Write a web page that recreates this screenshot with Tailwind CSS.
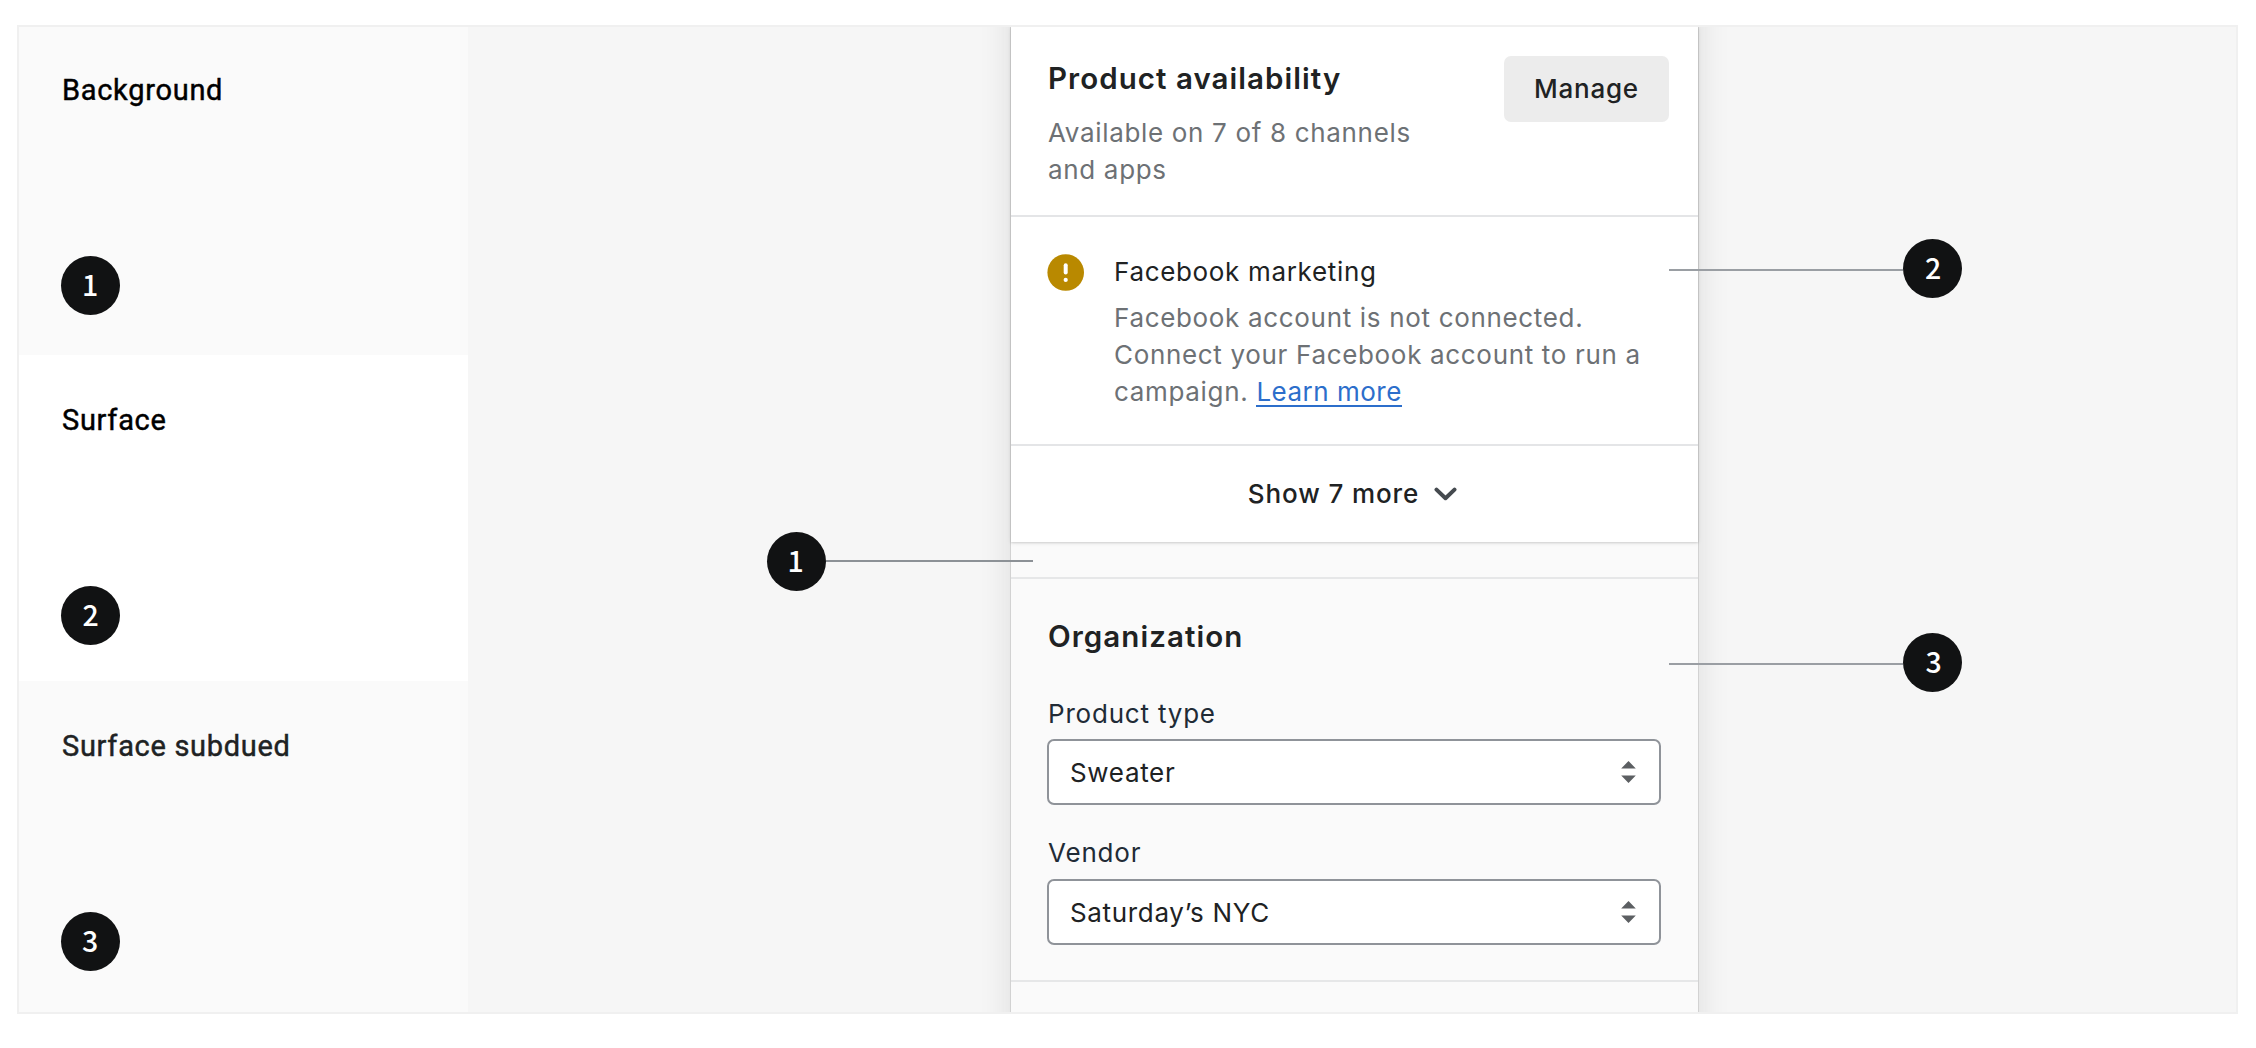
<!DOCTYPE html>
<html lang="en">
<head>
<meta charset="utf-8">
<title>Surface colors</title>
<script src="https://cdn.jsdelivr.net/npm/@tailwindcss/browser@4"></script>
</head>
<body class="h-[1048px] overflow-hidden bg-white pt-[25px] pl-[17px] font-['Inter',sans-serif] text-[26px] leading-[37px] tracking-[0.67px] text-[#202223]">
<main class="relative flex h-[989px] w-[2221px] overflow-hidden border-2 border-[#f0f0f0] bg-[#f6f6f6]">

  <!-- Color swatches -->
  <section class="flex w-[449px] flex-none flex-col font-['Roboto',sans-serif] text-[29px] leading-10 tracking-[0.7px] text-black">
    <div class="flex h-[328px] flex-col items-start bg-[#fafafa] pt-[43px] pl-[42px]">
      <h2 class="pl-px [-webkit-text-stroke:0.45px]">Background</h2>
      <span class="mt-[146px] flex size-[59px] items-center justify-center rounded-full bg-[#111213] pr-px pb-1 font-['Noto_Sans_CJK_SC',sans-serif] text-[28.5px] font-medium tracking-normal text-white">1</span>
    </div>
    <div class="flex h-[326px] flex-col items-start bg-white pt-[45px] pl-[42px]">
      <h2 class="pl-px [-webkit-text-stroke:0.45px]">Surface</h2>
      <span class="mt-[146px] flex size-[59px] items-center justify-center rounded-full bg-[#111213] pb-1 font-['Noto_Sans_CJK_SC',sans-serif] text-[28.5px] font-medium tracking-normal text-white">2</span>
    </div>
    <div class="flex flex-1 flex-col items-start bg-[#fafafa] pt-[45px] pl-[42px] text-[#202223]">
      <h2 class="pl-px [-webkit-text-stroke:0.45px]">Surface subdued</h2>
      <span class="mt-[146px] flex size-[59px] items-center justify-center rounded-full bg-[#111213] pr-px pb-[3px] font-['Noto_Sans_CJK_SC',sans-serif] text-[28.5px] font-medium tracking-normal text-white">3</span>
    </div>
  </section>

  <!-- Product sidebar -->
  <section class="-my-10 ml-[543px] flex w-[687px] flex-none flex-col bg-[#fafafa] pt-10 shadow-[0_0_0_1px_rgba(23,24,24,0.1),0_0_30px_rgba(23,24,24,0.12)]">
    <div class="flex-none bg-white shadow-[0_1px_2px_rgba(0,0,0,0.14),0_1px_5px_rgba(23,24,24,0.07)]">
      <div class="flex h-[190px] items-start justify-between border-b-2 border-[#e4e5e7] pr-[29px] pl-9">
        <div class="w-[400px] pt-[33px] pl-px">
          <h3 class="text-[29.5px] font-semibold tracking-[1.05px]">Product availability</h3>
          <p class="mt-[17px] text-[#6d7175]">Available on 7 of 8 channels<br>and apps</p>
        </div>
        <button class="mt-[29px] h-[66px] w-[165px] rounded-[7px] bg-[#ececec] pb-[2px] font-medium tracking-[0.75px]">Manage</button>
      </div>
      <div class="flex h-[229px] border-b-2 border-[#e4e5e7] pt-9 pl-9">
        <svg class="mt-px size-[37px] flex-none" viewBox="0 0 37 37"><circle cx="18.7" cy="18.5" r="18.3" fill="#b98900"/><path d="M18.7 11.2v7.2" stroke="#fff" stroke-width="4" stroke-linecap="round"/><circle cx="18.7" cy="25.9" r="2.1" fill="#fff"/></svg>
        <div class="ml-[30px]">
          <h4>Facebook marketing</h4>
          <p class="mt-[9px] w-[560px] text-[#6d7175]">Facebook account is not connected.<br>Connect your Facebook account to run a<br>campaign. <a class="inline-block h-[34px] border-b-2 border-[#2c6ecb] tracking-[0.5px] text-[#2c6ecb]">Learn more</a></p>
        </div>
      </div>
      <div class="flex h-24 items-center justify-center gap-[15px] pr-1 pb-px font-medium tracking-[0.9px]">
        <span>Show 7 more</span>
        <svg class="h-[14px] w-[23px]" viewBox="0 0 23 14" fill="none" stroke="#454a4f" stroke-width="4" stroke-linecap="round" stroke-linejoin="round"><path d="M2.5 2.6l9 8.6 9-8.6"/></svg>
      </div>
    </div>
    <div class="mt-[35px] h-[405px] flex-none border-y-2 border-[#e6e7e8] px-9 pt-[39px]">
      <h3 class="pl-px text-[29.5px] font-semibold tracking-[1.05px]">Organization</h3>
      <div class="mt-10 w-[614px]">
        <label class="block pl-px tracking-[0.8px] text-[#212b36]">Product type</label>
        <div class="mt-[7px] flex h-[66px] items-center justify-between rounded-[7px] border-2 border-[#8f9399] bg-white pr-[23px] pl-[21px]">
          <span>Sweater</span>
          <svg class="h-[22px] w-[15px]" viewBox="0 0 15 22" fill="#5c5f62"><path d="M7.5 0L14.8 7.4H.2zM7.5 22L14.8 14.6H.2z"/></svg>
        </div>
        <label class="mt-[29px] block pl-px tracking-[0.8px] text-[#212b36]">Vendor</label>
        <div class="mt-2 flex h-[66px] items-center justify-between rounded-[7px] border-2 border-[#8f9399] bg-white pr-[23px] pl-[21px]">
          <span>Saturday’s NYC</span>
          <svg class="h-[22px] w-[15px]" viewBox="0 0 15 22" fill="#5c5f62"><path d="M7.5 0L14.8 7.4H.2zM7.5 22L14.8 14.6H.2z"/></svg>
        </div>
      </div>
    </div>
  </section>

  <!-- Callouts pinned over the sidebar -->
  <div class="absolute top-[505px] left-[748px] flex items-center">
    <span class="flex size-[59px] items-center justify-center rounded-full bg-[#111213] pr-[2px] pb-[5px] font-['Noto_Sans_CJK_SC',sans-serif] text-[28.5px] font-medium tracking-normal text-white">1</span>
    <span class="-mt-px h-[2px] w-[207px] bg-[#8c9196]"></span>
  </div>
  <div class="absolute top-[212px] left-[1650px] flex items-center">
    <span class="mt-[2px] h-[2px] w-[234px] bg-[#9a9ea3]"></span>
    <span class="flex size-[59px] items-center justify-center rounded-full bg-[#111213] pb-[5px] pl-px font-['Noto_Sans_CJK_SC',sans-serif] text-[28.5px] font-medium tracking-normal text-white">2</span>
  </div>
  <div class="absolute top-[606px] left-[1650px] flex items-center">
    <span class="mt-[2px] h-[2px] w-[234px] bg-[#9a9ea3]"></span>
    <span class="flex size-[59px] items-center justify-center rounded-full bg-[#111213] pb-[5px] pl-[2px] font-['Noto_Sans_CJK_SC',sans-serif] text-[28.5px] font-medium tracking-normal text-white">3</span>
  </div>
</main>
</body>
</html>
